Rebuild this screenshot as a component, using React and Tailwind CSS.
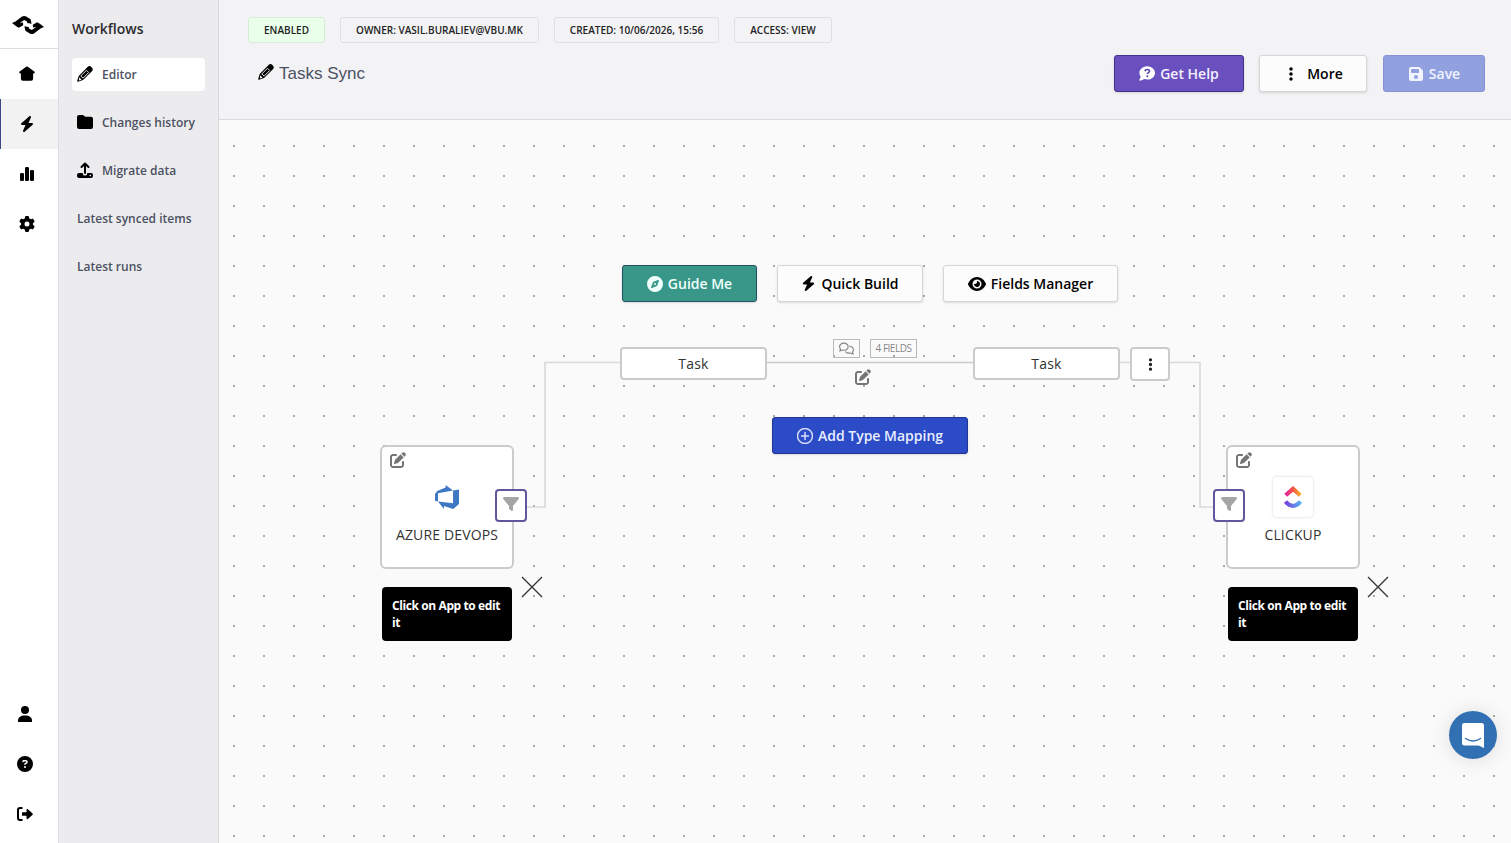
import {
  FaBolt,
  FaCircleQuestion,
  FaCompass,
  FaEllipsisVertical,
  FaEye,
  FaFilter,
  FaFloppyDisk,
  FaGear,
  FaPenToSquare,
  FaRegComments,
} from "react-icons/fa6";
import { BsPlusCircle } from "react-icons/bs";

function Logo() {
  return (
    <svg width="32" height="20" viewBox="0 0 32 20" fill="black">
      <path d="M0 8 3.500 6.500 10 1.600Q12 .4 14.200 1.600L18.600 4.200 19.600 8.800 15.200 8 15 6.400 12.200 4.900 7.800 8.100 11 7.600 11.200 10.200 6.800 12.800 4.200 11.200Z" />
      <path d="M32 12 28.500 13.500 22 18.400Q20 19.600 17.800 18.400L13.400 15.800 12.400 11.200 16.800 12 17 13.600 19.800 15.100 24.200 11.900 21 12.400 20.800 9.800 25.200 7.200 27.800 8.800Z" />
    </svg>
  );
}

function HomeIcon() {
  return (
    <svg width="16" height="16" viewBox="0 0 16 16">
      <path d="M7.200.8a1.300 1.300 0 0 1 1.600 0l6.500 4.700c.8.6.6 1.700-.4 1.900l-.8.2v5.200a2 2 0 0 1-2 2H3.900a2 2 0 0 1-2-2V7.600l-.8-.2C.1 7.200-.1 6.100.7 5.500Z" />
    </svg>
  );
}

function ChartIcon() {
  return (
    <svg width="16" height="16" viewBox="0 0 16 16">
      <rect x="1" y="7" width="4" height="8" rx="1.300" />
      <rect x="6" y="1" width="4" height="14" rx="1.300" />
      <rect x="11" y="4" width="4" height="11" rx="1.300" />
    </svg>
  );
}

function PersonIcon() {
  return (
    <svg width="16" height="18" viewBox="0 0 16 18">
      <circle cx="8" cy="5" r="4" />
      <path d="M1 17v-1.500C1 12.500 3.500 10.500 8 10.500s7 2 7 5V17Z" />
    </svg>
  );
}

function LogoutIcon() {
  return (
    <svg width="16" height="16" viewBox="0 0 16 16">
      <path d="M5.500 2H3a2 2 0 0 0-2 2v8a2 2 0 0 0 2 2h2.500" fill="none" stroke="black" strokeWidth="2" />
      <path d="M5.500 6.300h4V3.800c0-.8.900-1.100 1.400-.6l4.700 4.200c.4.400.4.900 0 1.300l-4.700 4.200c-.5.500-1.400.2-1.400-.6V9.800h-4A.6.6 0 0 1 5 9.200V6.900c0-.3.200-.6.500-.6Z" />
    </svg>
  );
}

function PencilIcon() {
  return (
    <svg width="16" height="16" viewBox="0 0 16 16">
      <path d="M10.300 1.300a2.900 2.900 0 0 1 4.300 0 2.900 2.900 0 0 1 .1 4.200L6 14.100.9 15.700c-.5.200-.8-.2-.7-.6L1.700 9.900Z" />
      <path d="m9.500 4.300 2.200 2.200-5.600 5.600-2.300-2.200Z" fill="none" stroke="white" strokeWidth=".9" strokeLinejoin="round" />
      <path d="m2.300 11.300 2.300 2.400-2.700.7Z" fill="white" />
    </svg>
  );
}

function FolderIcon() {
  return (
    <svg width="16" height="14" viewBox="0 0 16 14">
      <path d="M2 0h4l2.300 1.700H14a2 2 0 0 1 2 2V12a2 2 0 0 1-2 2H2a2 2 0 0 1-2-2V2a2 2 0 0 1 2-2Z" />
    </svg>
  );
}

function UploadIcon() {
  return (
    <svg width="16" height="17" viewBox="0 0 16 17">
      <path d="M8 11V2M4.500 5 8 1.500 11.500 5" fill="none" stroke="black" strokeWidth="2" strokeLinecap="round" strokeLinejoin="round" />
      <path d="M2 11h3.800v.4a2.200 2.200 0 0 0 4.400 0V11H14a2 2 0 0 1 2 2v1a2 2 0 0 1-2 2H2a2 2 0 0 1-2-2v-1a2 2 0 0 1 2-2Z" />
      <circle cx="13.300" cy="13.500" r=".8" fill="white" />
    </svg>
  );
}

function HelpBubbleIcon() {
  return (
    <svg width="16" height="15" viewBox="0 0 16 15">
      <path d="M8.200.2C12.500.2 16 3.200 16 6.900s-3.500 6.700-7.800 6.700c-1.100 0-2.100-.2-3-.5-1 .8-2.700 1.500-4.500 1.500-.5 0-.7-.6-.4-.9.700-.8 1.200-1.900 1.400-2.900A6.300 6.300 0 0 1 .4 6.900C.4 3.200 3.900.2 8.200.2Z" fill="white" />
      <path d="M6 5.200c.2-2.400 4.500-2.300 4.500.1 0 1.300-2.200 1.400-2.200 2.800" fill="none" stroke="#5747b0" strokeWidth="1.600" />
      <circle cx="8.300" cy="10.300" r="1" fill="#5747b0" />
    </svg>
  );
}

function AzureIcon() {
  return (
    <svg width="24" height="24" viewBox="0 0 24 24" fill="#3e78c5">
      <path d="M0 8.877L2.247 5.910l8.405-3.416V.022l7.370 5.393L2.966 8.338v8.225L0 15.707zm24-4.450v14.651l-5.753 4.900-9.303-3.057v3.056l-5.978-7.416 15.057 1.798V5.415z" />
    </svg>
  );
}

function ClickUpIcon() {
  return (
    <svg width="20" height="22" viewBox="1 0 22 24">
      <defs>
        <linearGradient id="cuTop" x1="0" x2="1">
          <stop offset="0" stopColor="#e018b8" />
          <stop offset=".5" stopColor="#f5553f" />
          <stop offset="1" stopColor="#f7c02f" />
        </linearGradient>
        <linearGradient id="cuBottom" x1="0" x2="1">
          <stop offset="0" stopColor="#7a35dd" />
          <stop offset="1" stopColor="#52bdf2" />
        </linearGradient>
      </defs>
      <path fill="url(#cuBottom)" d="M2 18.439l3.690-2.828c1.961 2.560 4.044 3.739 6.363 3.739 2.307 0 4.330-1.166 6.203-3.704L22 18.405C19.298 22.065 15.941 24 12.053 24 8.178 24 4.788 22.078 2 18.439z" />
      <path fill="url(#cuTop)" d="M12.040 6.150l-6.568 5.660-3.036-3.520L12.055 0l9.543 8.296-3.050 3.509z" />
    </svg>
  );
}

const badges = [
  { text: "ENABLED", className: "w-[77px] bg-[#eaffea] border-[#d5ecd8]" },
  { text: "OWNER: VASIL.BURALIEV@VBU.MK", className: "w-[199px] border-[#e0e0e3]" },
  { text: "CREATED: 10/06/2026, 15:56", className: "w-[165px] border-[#e0e0e3]" },
  { text: "ACCESS: VIEW", className: "w-[98px] border-[#e0e0e3]" },
];

const menu = [
  { text: "Editor", icon: <PencilIcon />, active: true },
  { text: "Changes history", icon: <FolderIcon /> },
  { text: "Migrate data", icon: <UploadIcon /> },
  { text: "Latest synced items" },
  { text: "Latest runs" },
];

function Button({ className, children }) {
  return (
    <button
      className={`flex h-[37px] items-center justify-center rounded-[3px] border text-[14px] font-semibold whitespace-nowrap ${className}`}
    >
      {children}
    </button>
  );
}

function IconRail() {
  return (
    <nav className="flex w-[59px] shrink-0 flex-col border-r border-[#dedee0] bg-white">
      <div className="flex h-[49px] items-center justify-center border-b border-[#dedee0] pt-px pr-[3px]">
        <Logo />
      </div>
      <div className="flex h-[50px] items-center justify-center pr-[5px]"><HomeIcon /></div>
      <div className="flex h-[50px] items-center justify-center border-l border-[#3c4687] bg-[#f2f2f3] pr-[6px]">
        <FaBolt size={16} />
      </div>
      <div className="flex h-[50px] items-center justify-center pr-[5px]"><ChartIcon /></div>
      <div className="flex h-[50px] items-center justify-center pr-[5px]"><FaGear size={16} /></div>
      <div className="mt-auto flex flex-col pb-1">
        <div className="flex h-[50px] items-center justify-center pr-[8px]"><PersonIcon /></div>
        <div className="flex h-[50px] items-center justify-center pr-[8px]"><FaCircleQuestion size={16} /></div>
        <div className="flex h-[50px] items-center justify-center pr-[8px]"><LogoutIcon /></div>
      </div>
    </nav>
  );
}

function Sidebar() {
  return (
    <aside className="w-[160px] shrink-0 border-r border-[#d9d9dc] bg-[#ececee] pl-[13px] pt-[19px]">
      <h2 className="text-[14px] leading-5 font-semibold text-[#2b2b2f]">Workflows</h2>
      <ul className="mt-[19px] flex flex-col gap-[15px]">
        {menu.map((item) => (
          <li
            key={item.text}
            className={`flex h-[33px] w-[133px] items-center gap-[9px] rounded pl-[5px] text-[12px] font-semibold whitespace-nowrap text-[#4b5162] ${item.active ? "bg-white" : ""}`}
          >
            {item.icon && <span className="pb-px text-black">{item.icon}</span>}
            <span className="pt-px">{item.text}</span>
          </li>
        ))}
      </ul>
    </aside>
  );
}

function Header() {
  return (
    <header className="h-[120px] shrink-0 border-b border-[#dadadc] bg-[#f3f3f5] pt-[17px] pr-[26px] pl-[29px]">
      <div className="flex gap-[15px]">
        {badges.map((b) => (
          <span
            key={b.text}
            className={`flex h-[26px] items-center justify-center rounded-[3px] border pt-px text-[10px] font-semibold whitespace-nowrap text-[#222] ${b.className}`}
          >
            {b.text}
          </span>
        ))}
      </div>
      <div className="mt-3 flex h-[37px] items-center">
        <div className="flex items-center gap-[5px] pl-[10px]">
          <span className="pb-[3px]"><PencilIcon /></span>
          <h1 className="font-['Liberation_Sans'] text-[17px] text-[#4b5162]">Tasks Sync</h1>
        </div>
        <div className="ml-auto flex">
          <Button className="w-[130px] gap-[5px] border-[#43318c] bg-[#6950be] text-[#f4f1ff] shadow-sm">
            <HelpBubbleIcon />
            Get Help
          </Button>
          <Button className="ml-[15px] w-[108px] gap-2 border-[#d6d6d9] bg-[#fcfcfc] text-black shadow-sm">
            <FaEllipsisVertical size={16} />
            More
          </Button>
          <Button className="ml-4 w-[102px] gap-[5px] border-[#8492d4] bg-[#91a0df] text-[#f2f5ff]">
            <FaFloppyDisk size={16} />
            Save
          </Button>
        </div>
      </div>
    </header>
  );
}

function AppNode({ name, icon, filterSide, className }) {
  return (
    <div className={`absolute top-[325px] w-[134px] ${className}`}>
      <div className="relative h-[124px] rounded-md border-2 border-[#cbcbcb] bg-white">
        <FaPenToSquare size={16} className="absolute top-[5px] left-[8px] text-[#757575]" />
        <div className="flex h-[98px] flex-col items-center pt-[30px] text-[#333]">
          <div className="flex h-10 w-10 items-center justify-center">{icon}</div>
          <span className="mt-2 text-[14px] leading-5 font-medium tracking-[0.15px] whitespace-nowrap">{name}</span>
        </div>
        <div
          className={`absolute top-[42px] flex h-[33px] w-8 items-center justify-center rounded border-2 border-[#62569c] bg-white pb-1 text-[#a5a5a5] ${filterSide === "right" ? "right-[-15px]" : "left-[-15px]"}`}
        >
          <FaFilter size={16} />
        </div>
      </div>
      {/* hint under the app */}
      <div className="relative mt-[18px] ml-[2px] h-[54px] w-[130px] rounded bg-black px-[10px] pt-[10px] text-[12px] leading-[17px] font-bold tracking-[-0.4px] text-white">
        Click on App to edit it
        <svg className="absolute top-[-11px] left-[139px]" width="22" height="22" stroke="#333" strokeWidth="1.300">
          <path d="m1 1 20 20M21 1 1 21" />
        </svg>
      </div>
    </div>
  );
}

function TypeBox({ className }) {
  return (
    <div
      className={`absolute top-[227px] flex h-[33px] w-[147px] items-center justify-center rounded border-2 border-[#cbcbcb] bg-white text-[14px] font-medium tracking-[0.2px] text-[#333] ${className}`}
    >
      Task
    </div>
  );
}

function Canvas() {
  return (
    <main className="relative flex-1 overflow-hidden bg-[#fafafa] bg-[radial-gradient(circle_at_15px_15px,#aaa_0.9px,transparent_1.3px)] bg-[length:30px_30px] bg-[position:0_11px]">
      <svg className="absolute inset-0" width="1292" height="723" fill="none" stroke="#d9d9d9" strokeWidth="1.600">
        <path d="M308 387H326V242.500H402M901 242.500H981V387H1000" />
        <path d="M548 242.500H754" stroke="#cbcbcb" />
      </svg>

      <div className="absolute top-[145px] left-[403px] flex">
        <Button className="w-[135px] gap-[5px] border-[#245064] bg-[#39978a] text-[#effffb] shadow-sm">
          <FaCompass size={16} />
          Guide Me
        </Button>
        <Button className="ml-5 w-[146px] gap-[5px] border-[#d6d6d9] bg-[#fcfcfc] text-black shadow-sm">
          <FaBolt size={15} />
          Quick Build
        </Button>
        <Button className="ml-5 w-[175px] gap-[5px] border-[#d6d6d9] bg-[#fcfcfc] text-black shadow-sm">
          <FaEye size={18} />
          Fields Manager
        </Button>
      </div>

      <TypeBox className="left-[401px]" />
      <TypeBox className="left-[754px]" />
      <div className="absolute top-[227px] left-[911px] flex h-[34px] w-10 items-center justify-center rounded border-2 border-[#cbcbcb] bg-white text-[#222]">
        <FaEllipsisVertical size={15} />
      </div>

      <div className="absolute top-[219px] left-[614px] flex gap-[10px] text-[#888]">
        <span className="flex h-[19px] w-[27px] items-center justify-center border border-[#b9b9b9]">
          <FaRegComments size={15} />
        </span>
        <span className="flex h-[19px] w-[47px] items-center justify-center border border-[#b9b9b9] text-[10px] tracking-[-0.5px] whitespace-nowrap">
          4 FIELDS
        </span>
      </div>
      <FaPenToSquare size={16} className="absolute top-[249px] left-[636px] text-[#757575]" />

      <Button className="absolute top-[297px] left-[553px] w-[196px] gap-[5px] border-[#203590] bg-[#2b4bc7] text-[#e9eeff] shadow-sm">
        <BsPlusCircle size={16} strokeWidth=".4" />
        Add Type Mapping
      </Button>

      <AppNode name="AZURE DEVOPS" icon={<AzureIcon />} filterSide="right" className="left-[161px]" />
      <AppNode
        name="CLICKUP"
        icon={
          <span className="flex h-10 w-10 items-center justify-center rounded-sm bg-white shadow-[0_0_3px_rgba(0,0,0,0.18)]">
            <ClickUpIcon />
          </span>
        }
        filterSide="left"
        className="left-[1007px]"
      />

      {/* chat launcher */}
      <button className="absolute top-[591px] left-[1230px] flex h-12 w-12 items-center justify-center rounded-full bg-[#3270b4] shadow-[0_1px_20px_rgba(0,0,0,0.12)]">
        <svg width="22" height="25" viewBox="0 0 22 25">
          <path d="M2.500 0h17A2.500 2.500 0 0 1 22 2.500V25l-5.500-2.500h-14A2.500 2.500 0 0 1 0 20V2.500A2.500 2.500 0 0 1 2.500 0Z" fill="white" />
          <path d="M3.500 15.500q7.500 5 15 0" fill="none" stroke="#3270b4" strokeWidth="1.500" strokeLinecap="round" />
        </svg>
      </button>
    </main>
  );
}

export default function App() {
  return (
    <div className="flex h-[843px] w-[1511px] overflow-hidden bg-white font-['Open_Sans',sans-serif] text-black">
      <IconRail />
      <Sidebar />
      <div className="flex min-w-0 flex-1 flex-col">
        <Header />
        <Canvas />
      </div>
    </div>
  );
}
